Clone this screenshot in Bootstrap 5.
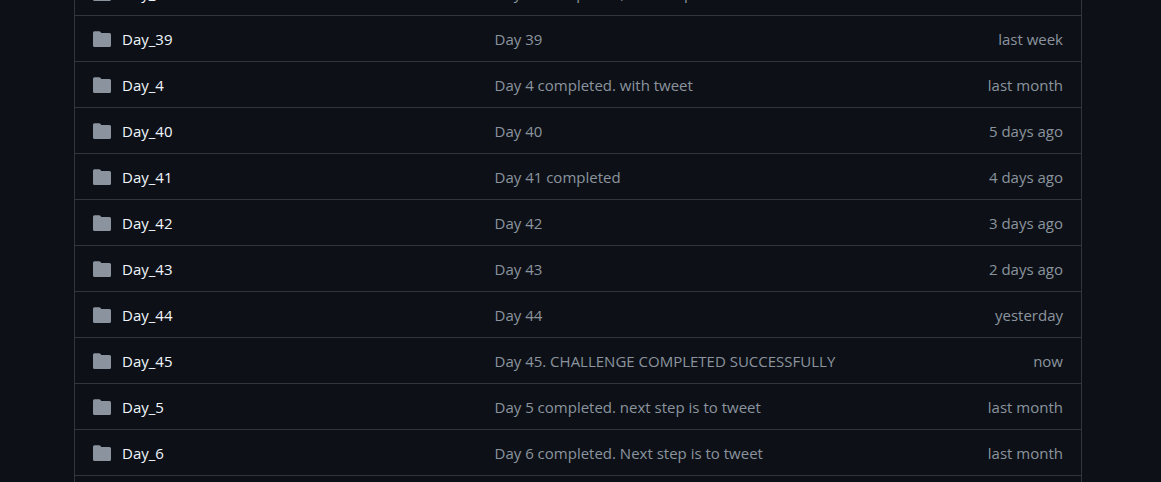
<!DOCTYPE html>
<html lang="en" data-bs-theme="dark">
<head>
<meta charset="utf-8">
<meta name="viewport" content="width=device-width, initial-scale=1">
<title>Files</title>
<link href="https://cdn.jsdelivr.net/npm/bootstrap@5.3.0/dist/css/bootstrap.min.css" rel="stylesheet">
<style>
body { background: #0d1117; font-family: "Open Sans", "Noto Sans", sans-serif; font-size: 15px; line-height: 24px; }
.viewport { padding: 0 79px 0 74px; }
/* the list is scrolled part-way through its first row */
.file-list { margin-top: -31px; border: 1px solid #30363d; --bs-table-bg: transparent; --bs-table-color: #8b949e; color: #8b949e; table-layout: fixed; }
.file-list td { height: 46px; padding: 0 18px; border-bottom: 1px solid #30363d; white-space: nowrap; }
.file-list .msg { padding-left: 0; }
.col-name { width: 420px; }
.col-age { width: 150px; }
.file-list a { color: inherit; text-decoration: none; }
.file-list a:hover { text-decoration: underline; }
.file-list .fname { color: #f0f6fc; }
.folder { width: 18px; height: 18px; fill: #8b949e; margin-right: 11px; flex: none; }
</style>
</head>
<body>
<svg class="d-none" aria-hidden="true"><symbol id="folder" viewBox="0 0 18 18"><path d="M1.5 1.2H6.2Q7 1.2 7.5 1.9L8.3 3H16.5Q18 3 18 4.5V15.5Q18 17 16.5 17H1.5Q0 17 0 15.5V2.7Q0 1.2 1.5 1.2Z"/></symbol></svg>
<main class="viewport vh-100 overflow-hidden">
<table class="table file-list mb-0 align-middle" aria-label="Files">
<colgroup><col class="col-name"><col><col class="col-age"></colgroup>
<tbody>
<tr><td><div class="d-flex align-items-center"><svg class="folder" aria-hidden="true"><use href="#folder"/></svg><a class="fname" href="#">Day_38</a></div></td><td class="msg"><a href="#">Day 38 completed, next step is to tweet</a></td><td class="text-end">last week</td></tr>
<tr><td><div class="d-flex align-items-center"><svg class="folder" aria-hidden="true"><use href="#folder"/></svg><a class="fname" href="#">Day_39</a></div></td><td class="msg"><a href="#">Day 39</a></td><td class="text-end">last week</td></tr>
<tr><td><div class="d-flex align-items-center"><svg class="folder" aria-hidden="true"><use href="#folder"/></svg><a class="fname" href="#">Day_4</a></div></td><td class="msg"><a href="#">Day 4 completed. with tweet</a></td><td class="text-end">last month</td></tr>
<tr><td><div class="d-flex align-items-center"><svg class="folder" aria-hidden="true"><use href="#folder"/></svg><a class="fname" href="#">Day_40</a></div></td><td class="msg"><a href="#">Day 40</a></td><td class="text-end">5 days ago</td></tr>
<tr><td><div class="d-flex align-items-center"><svg class="folder" aria-hidden="true"><use href="#folder"/></svg><a class="fname" href="#">Day_41</a></div></td><td class="msg"><a href="#">Day 41 completed</a></td><td class="text-end">4 days ago</td></tr>
<tr><td><div class="d-flex align-items-center"><svg class="folder" aria-hidden="true"><use href="#folder"/></svg><a class="fname" href="#">Day_42</a></div></td><td class="msg"><a href="#">Day 42</a></td><td class="text-end">3 days ago</td></tr>
<tr><td><div class="d-flex align-items-center"><svg class="folder" aria-hidden="true"><use href="#folder"/></svg><a class="fname" href="#">Day_43</a></div></td><td class="msg"><a href="#">Day 43</a></td><td class="text-end">2 days ago</td></tr>
<tr><td><div class="d-flex align-items-center"><svg class="folder" aria-hidden="true"><use href="#folder"/></svg><a class="fname" href="#">Day_44</a></div></td><td class="msg"><a href="#">Day 44</a></td><td class="text-end">yesterday</td></tr>
<tr><td><div class="d-flex align-items-center"><svg class="folder" aria-hidden="true"><use href="#folder"/></svg><a class="fname" href="#">Day_45</a></div></td><td class="msg"><a href="#">Day 45. CHALLENGE COMPLETED SUCCESSFULLY</a></td><td class="text-end">now</td></tr>
<tr><td><div class="d-flex align-items-center"><svg class="folder" aria-hidden="true"><use href="#folder"/></svg><a class="fname" href="#">Day_5</a></div></td><td class="msg"><a href="#">Day 5 completed. next step is to tweet</a></td><td class="text-end">last month</td></tr>
<tr><td><div class="d-flex align-items-center"><svg class="folder" aria-hidden="true"><use href="#folder"/></svg><a class="fname" href="#">Day_6</a></div></td><td class="msg"><a href="#">Day 6 completed. Next step is to tweet</a></td><td class="text-end">last month</td></tr>
<tr><td colspan="3"></td></tr>
</tbody>
</table>
</main>
<script src="https://cdn.jsdelivr.net/npm/bootstrap@5.3.0/dist/js/bootstrap.bundle.min.js"></script>
</body>
</html>
